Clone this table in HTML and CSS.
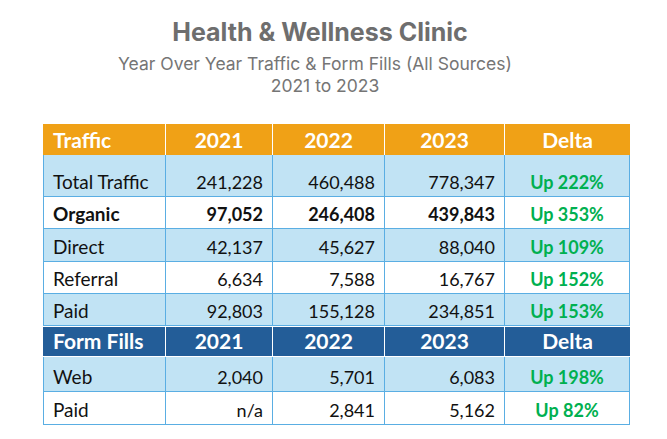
FILE: index.html
```html
<!DOCTYPE html>
<html>
<head>
<meta charset="utf-8">
<link rel="stylesheet" href="styles.css">
</head>
<body>
<div class="page">
  <div class="heading">
    <div class="title">Health &amp; Wellness Clinic</div>
    <div class="subtitle">Year Over Year Traffic &amp; Form Fills (All Sources)</div>
    <div class="range">2021 to 2023</div>
  </div>
  <div class="report">
    <div class="cell hd orange lbl first">Traffic</div>
    <div class="cell hd orange">2021</div>
    <div class="cell hd orange">2022</div>
    <div class="cell hd orange">2023</div>
    <div class="cell hd orange last">Delta</div>

    <div class="cell bd blue lbl first">Total Traffic</div>
    <div class="cell bd blue num">241,228</div>
    <div class="cell bd blue num">460,488</div>
    <div class="cell bd blue num">778,347</div>
    <div class="cell bd blue delta">Up 222%</div>

    <div class="cell bd white strong lbl first">Organic</div>
    <div class="cell bd white strong num">97,052</div>
    <div class="cell bd white strong num">246,408</div>
    <div class="cell bd white strong num">439,843</div>
    <div class="cell bd white delta">Up 353%</div>

    <div class="cell bd blue lbl first">Direct</div>
    <div class="cell bd blue num">42,137</div>
    <div class="cell bd blue num">45,627</div>
    <div class="cell bd blue num">88,040</div>
    <div class="cell bd blue delta">Up 109%</div>

    <div class="cell bd white lbl first">Referral</div>
    <div class="cell bd white num">6,634</div>
    <div class="cell bd white num">7,588</div>
    <div class="cell bd white num">16,767</div>
    <div class="cell bd white delta">Up 152%</div>

    <div class="cell bd blue lbl first">Paid</div>
    <div class="cell bd blue num">92,803</div>
    <div class="cell bd blue num">155,128</div>
    <div class="cell bd blue num">234,851</div>
    <div class="cell bd blue delta">Up 153%</div>

    <div class="cell hd navy lbl first">Form Fills</div>
    <div class="cell hd navy">2021</div>
    <div class="cell hd navy">2022</div>
    <div class="cell hd navy">2023</div>
    <div class="cell hd navy last">Delta</div>

    <div class="cell bd blue lbl first">Web</div>
    <div class="cell bd blue num">2,040</div>
    <div class="cell bd blue num">5,701</div>
    <div class="cell bd blue num">6,083</div>
    <div class="cell bd blue delta">Up 198%</div>

    <div class="cell bd white lbl first">Paid</div>
    <div class="cell bd white num">n/a</div>
    <div class="cell bd white num">2,841</div>
    <div class="cell bd white num">5,162</div>
    <div class="cell bd white delta">Up 82%</div>
  </div>
</div>
</body>
</html>
```
FILE: styles.css
```css
html, body {
  margin: 0;
  padding: 0;
  background: #ffffff;
}

.page {
  width: 667px;
  height: 439px;
  padding-top: 17px;
  box-sizing: border-box;
}

.heading {
  width: 640px;
  text-align: center;
  font-family: Inter, "Liberation Sans", sans-serif;
}

.title {
  font-size: 25px;
  font-weight: 700;
  color: #6e6e6e;
  line-height: 30px;
}

.subtitle {
  font-size: 17.5px;
  color: #757575;
  line-height: 23px;
  margin-top: 5px;
  padding-right: 10px;
}

.range {
  font-size: 17.5px;
  color: #757575;
  line-height: 22px;
  padding-left: 10px;
}

.report {
  margin-top: 27px;
  margin-left: 43px;
  display: grid;
  grid-template-columns: 123px 107px 112px 120px 125px;
  grid-template-rows: 31px 42px 32px 33px 32px 32px 31px 35px 33px;
  width: 587px;
  font-family: Lato, "Liberation Sans", sans-serif;
}

.cell {
  box-sizing: border-box;
  display: flex;
  align-items: flex-end;
  justify-content: center;
  padding: 0 9px 3px 9px;
  white-space: nowrap;
  overflow: hidden;
}

.hd {
  font-size: 21px;
  font-weight: 700;
  line-height: 25px;
  color: #ffffff;
  border-right: 1px solid #ffffff;
}

.hd.last {
  border-right: none;
}

.orange {
  background: #f0a116;
}

.navy {
  background: #235d98;
  border-top: 1px solid #ffffff;
  border-bottom: 1px solid #ffffff;
}

.bd {
  font-size: 19px;
  line-height: 22px;
  color: #111111;
  border-right: 1px solid #5aaee3;
  border-bottom: 1px solid #5aaee3;
}

.bd.first {
  border-left: 1px solid #5aaee3;
}

.hd.first {
  padding-left: 10px;
}

.blue {
  background: #c1e3f4;
}

.white {
  background: #ffffff;
}

.strong {
  font-weight: 700;
}

.lbl {
  justify-content: flex-start;
}

.num {
  justify-content: flex-end;
  font-size: 18px;
}

.delta {
  font-size: 18px;
  font-weight: 700;
  color: #00b050;
}
```
